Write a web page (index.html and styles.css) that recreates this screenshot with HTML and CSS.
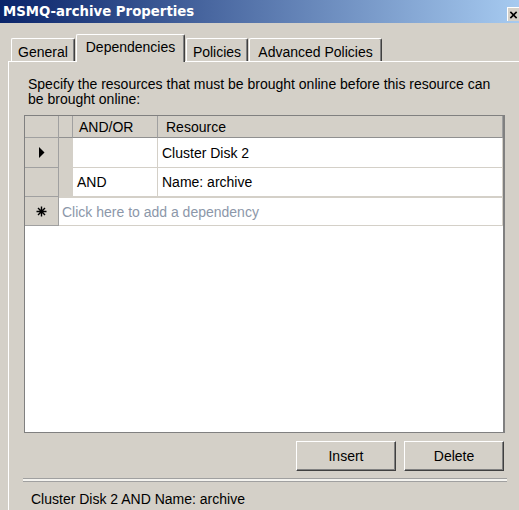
FILE: index.html
```html
<!DOCTYPE html>
<html lang="en">
<head>
  <meta charset="UTF-8">
  <title>MSMQ-archive Properties</title>
  <link rel="stylesheet" href="styles.css">
</head>
<body>
  <div class="titlebar">
    <span class="title">MSMQ-archive Properties</span>
    <span class="close-btn">
      <svg width="14" height="12" viewBox="0 0 14 12"><path d="M3 2 L11 10 M11 2 L3 10" stroke="#000" stroke-width="2"/></svg>
    </span>
  </div>

  <div class="tabs">
    <div class="tab tab-general">General</div>
    <div class="tab tab-deps selected">Dependencies</div>
    <div class="tab tab-policies">Policies</div>
    <div class="tab tab-advanced">Advanced Policies</div>
  </div>

  <div class="panel">
    <p class="intro">Specify the resources that must be brought online before this resource can<br>be brought online:</p>

    <!-- Dependency grid -->
    <div class="grid">
      <div class="cell head rowhead"></div>
      <div class="cell head gutter"></div>
      <div class="cell head col-andor">AND/OR</div>
      <div class="cell head col-res">Resource</div>

      <div class="cell rowhead row-1">
        <svg width="6" height="11" viewBox="0 0 6 11"><polygon points="0,0 5.5,5.5 0,11" fill="#000"/></svg>
      </div>
      <div class="cell gutter row-1"></div>
      <div class="cell row-1"></div>
      <div class="cell row-1">Cluster Disk 2</div>

      <div class="cell rowhead"></div>
      <div class="cell gutter"></div>
      <div class="cell">AND</div>
      <div class="cell">Name: archive</div>

      <div class="cell rowhead">
        <svg width="11" height="11" viewBox="0 0 11 11"><path d="M5.5 0.5 V10.5 M0.5 5.5 H10.5 M2 2 L9 9 M9 2 L2 9" stroke="#000" stroke-width="1.4"/></svg>
      </div>
      <div class="cell new-row">Click here to add a dependency</div>
    </div>

    <div class="actions">
      <button class="btn">Insert</button>
      <button class="btn">Delete</button>
    </div>

    <div class="separator"></div>
    <div class="status">Cluster Disk 2 AND Name: archive</div>
  </div>
</body>
</html>
```

FILE: styles.css
```css
/* Global */
* {
  box-sizing: border-box;
}
body {
  margin: 0;
  width: 519px;
  height: 510px;
  overflow: hidden;
  background: #d4d0c8;
  font-family: "Liberation Sans", Arial, sans-serif;
  font-size: 14px;
  color: #000;
}
/* Title bar */
.titlebar {
  height: 23px;
  display: flex;
  align-items: flex-start;
  background: linear-gradient(to right, #0a246a, #a6caf0);
}
.title {
  font-family: "DejaVu Sans", sans-serif;
  font-weight: bold;
  font-size: 13.3px;
  line-height: 23px;
  color: #fff;
  padding-left: 3px;
}
.close-btn {
  margin-left: auto;
  margin-top: 7px;
  width: 12px;
  height: 14px;
  background: #d4d0c8;
  border-top: 1px solid #fff;
  border-left: 1px solid #fff;
  overflow: hidden;
  display: flex;
  align-items: center;
}
/* Tabs */
.tabs {
  height: 38px;
  display: flex;
  align-items: flex-end;
  padding-left: 11px;
}
.tab {
  height: 23px;
  padding-top: 5px;
  line-height: 16px;
  text-align: center;
  background: #d4d0c8;
  border-top: 1px solid #fff;
  border-left: 1px solid #fff;
  border-right: 1px solid #404040;
  border-radius: 2px 2px 0 0;
  box-shadow: inset -1px 0 #808080;
}
.tab.selected {
  height: 28px;
  padding-top: 4px;
  margin-bottom: -1px;
  position: relative;
  z-index: 1;
}
.tab-general { width: 64px; }
.tab-deps { width: 109px; margin-left: 1px; }
.tab-policies { width: 62px; margin-left: 1px; }
.tab-advanced { width: 133px; margin-left: 1px; }
/* Tab page */
.panel {
  margin-left: 8px;
  width: 511px;
  height: 449px;
  border-top: 1px solid #fff;
  border-left: 1px solid #fff;
  padding: 15px 0 0 15px;
}
.intro {
  margin: 0 0 8px 4px;
  line-height: 15px;
  white-space: nowrap;
}
/* Grid */
.grid {
  width: 481px;
  height: 318px;
  background: #fff;
  border: 1px solid #808080;
  border-right-width: 2px;
  display: grid;
  grid-template-columns: 34px 14px 85px 1fr;
  grid-template-rows: 22px 30px 29px 29px;
  align-content: start;
}
.cell {
  display: flex;
  align-items: center;
  padding-left: 4px;
  border-right: 1px solid #d4d0c8;
  border-bottom: 1px solid #d4d0c8;
  white-space: nowrap;
}
.head {
  background: #d4d0c8;
  border-right-color: #a0a0a0;
  border-bottom-color: #909090;
}
.col-andor { padding-left: 6px; }
.col-res { padding-left: 8px; }
.rowhead {
  background: #d4d0c8;
  border-right-color: #a0a0a0;
  border-bottom-color: #a0a0a0;
  justify-content: center;
  padding-left: 0;
}
.gutter {
  background: #d4d0c8;
}
.head.gutter {
  border-right-color: #a0a0a0;
}
.new-row {
  grid-column: 2 / 5;
  padding-left: 3px;
  color: #8c97a9;
  border: 1px solid #d4d0c8;
  border-left: none;
}
/* Buttons */
.actions {
  width: 480px;
  margin-top: 8px;
  display: flex;
  justify-content: flex-end;
  gap: 8px;
}
.btn {
  width: 100px;
  height: 30px;
  padding: 0;
  font-family: "Liberation Sans", Arial, sans-serif;
  font-size: 14px;
  color: #000;
  background: #d4d0c8;
  border: 1px solid;
  border-color: #fff #404040 #404040 #fff;
  box-shadow: inset -1px -1px #808080;
}
/* Status */
.separator {
  margin: 7px 0 0 -1px;
  width: 484px;
  height: 4px;
  background: #f4f3ef;
  border-top: 1px solid #a0a0a0;
  border-bottom: 1px solid #a0a0a0;
}
.status {
  margin: 9px 0 0 7px;
  line-height: 16px;
}
```
